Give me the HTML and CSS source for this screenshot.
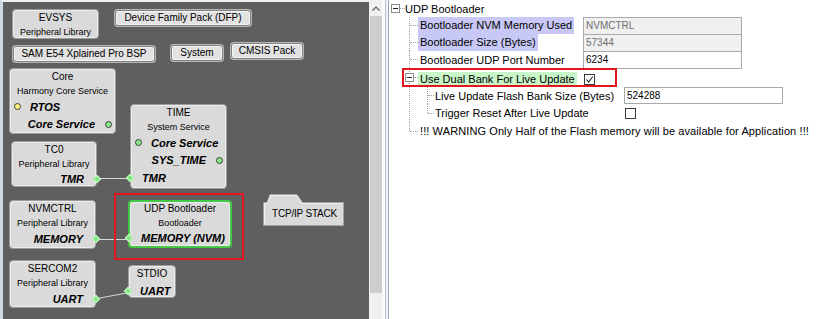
FILE: index.html
```html
<!DOCTYPE html>
<html>
<head>
<meta charset="utf-8">
<link rel="stylesheet" href="styles.css">
</head>
<body>
<div class="app">
  <div class="left">
    <div class="canvas">
      <svg class="wires" width="366" height="317">
        <line x1="94" y1="176.5" x2="127" y2="176.5"/>
        <line x1="93" y1="237.5" x2="125" y2="237.5"/>
        <line x1="93" y1="296.75" x2="125" y2="290.75"/>
      </svg>

      <div class="node evsys">
        <div class="title">EVSYS</div>
        <div class="sub">Peripheral Library</div>
      </div>
      <div class="btn dfp">Device Family Pack (DFP)</div>
      <div class="btn sam">SAM E54 Xplained Pro BSP</div>
      <div class="btn sys">System</div>
      <div class="btn cmsis">CMSIS Pack</div>

      <div class="node core">
        <div class="title">Core</div>
        <div class="sub">Harmony Core Service</div>
        <div class="port in"><i class="dot yellow"></i><span>RTOS</span></div>
        <div class="port out"><span>Core Service</span><i class="dot green"></i></div>
      </div>

      <div class="node time">
        <div class="title">TIME</div>
        <div class="sub">System Service</div>
        <div class="port in"><i class="dot green"></i><span>Core Service</span></div>
        <div class="port out"><span>SYS_TIME</span><i class="dot green"></i></div>
        <div class="port in"><i class="dia"></i><span>TMR</span></div>
      </div>

      <div class="node tc0">
        <div class="title">TC0</div>
        <div class="sub">Peripheral Library</div>
        <div class="port out"><span>TMR</span><i class="dia"></i></div>
      </div>

      <div class="node nvm">
        <div class="title">NVMCTRL</div>
        <div class="sub">Peripheral Library</div>
        <div class="port out"><span>MEMORY</span><i class="dia"></i></div>
      </div>

      <div class="node udp">
        <div class="title">UDP Bootloader</div>
        <div class="sub">Bootloader</div>
        <div class="port in"><i class="dia"></i><span>MEMORY (NVM)</span></div>
      </div>

      <div class="sel"></div>

      <div class="node sercom">
        <div class="title">SERCOM2</div>
        <div class="sub">Peripheral Library</div>
        <div class="port out"><span>UART</span><i class="dia"></i></div>
      </div>

      <div class="node stdio">
        <div class="title">STDIO</div>
        <div class="port in"><i class="dia"></i><span>UART</span></div>
      </div>

      <div class="folder">
        <svg class="folder-shape" width="84" height="34">
          <path d="M1.5 9.5 H5 L8 1.5 H35 L40.5 9.5 H81.5 V32.5 H1.5 Z" fill="#dadada" stroke="#a3a3a3"/>
          <path d="M2.5 31.5 V10.5 H5.5 L8.6 2.5 H34.5 L40 10.5 H80.5" fill="none" stroke="#f2f2f2"/>
        </svg>
        <div class="folder-label">TCP/IP STACK</div>
      </div>
    </div>
  </div>

  <div class="vscroll">
    <div class="arrow">
      <svg width="8" height="5"><polyline points="0.5,4.5 4,1 7.5,4.5" fill="none" stroke="#606060" stroke-width="1.2"/></svg>
    </div>
    <div class="thumb"></div>
  </div>

  <div class="splitter"></div>

  <div class="right">
    <div class="tree">
      <div class="root"><span class="tog"></span><span class="stub"></span><span class="root-label">UDP Bootloader</span></div>
      <div class="kids">
        <div class="item">
          <div class="lc"><span class="hl-blue">Bootloader NVM Memory Used</span></div>
          <div class="field dis">NVMCTRL</div>
        </div>
        <div class="item">
          <div class="lc"><span class="hl-blue">Bootloader Size (Bytes)</span></div>
          <div class="field dis">57344</div>
        </div>
        <div class="item">
          <div class="lc"><span>Bootloader UDP Port Number</span></div>
          <div class="field">6234</div>
        </div>
        <div class="grp">
          <div class="row5">
            <span class="tog"></span><span class="stub short"></span>
            <div class="lc"><span class="hl-green">Use Dual Bank For Live Update</span></div>
            <span class="cb"><svg width="9" height="9"><polyline points="1.5,4.5 3.6,7 7.8,1.5" fill="none" stroke="#2a2a2a" stroke-width="1.1"/></svg></span>
            <div class="hilite"></div>
          </div>
          <div class="kids nested">
            <div class="item">
              <div class="lc"><span>Live Update Flash Bank Size (Bytes)</span></div>
              <div class="field short">524288</div>
            </div>
            <div class="item tall">
              <div class="lc"><span>Trigger Reset After Live Update</span></div>
              <span class="cb"></span>
            </div>
          </div>
        </div>
        <div class="item tall">
          <span class="warn">!!! WARNING Only Half of the Flash memory will be available for Application !!!</span>
        </div>
      </div>
    </div>
  </div>
</div>
</body>
</html>
```

FILE: styles.css
```css
* { box-sizing: border-box; }
html, body { margin: 0; padding: 0; }
body {
  width: 820px;
  height: 319px;
  overflow: hidden;
  background: #ffffff;
  font-family: "Liberation Sans", Arial, sans-serif;
  color: #000;
}
.app { display: flex; height: 319px; }

/* ---------- left diagram ---------- */
.left {
  width: 369px;
  flex: none;
  border-top: 2px solid #eef0f2;
  border-left: 3px solid #d3d9e1;
  background: #5f5f5f;
  overflow: hidden;
}
.canvas { position: relative; width: 100%; height: 100%; }
.wires { position: absolute; left: 0; top: 0; }
.wires line { stroke: #d8d8d8; stroke-width: 1; }

.node {
  position: absolute;
  display: flex;
  flex-direction: column;
  background: #dadada;
  border: 1px solid #9b9b9b;
  border-radius: 4px;
  box-shadow: inset 0 0 0 1px #ececec;
  text-align: center;
}
.title { font-size: 10px; line-height: 15px; white-space: nowrap; }
.sub { font-size: 9px; line-height: 14px; white-space: nowrap; }

.port {
  display: flex;
  align-items: center;
  height: 17.5px;
  font-size: 11px;
  font-weight: bold;
  font-style: italic;
  white-space: nowrap;
}
.port.out { justify-content: flex-end; }
.port.in { justify-content: flex-start; }

.dot {
  flex: none;
  width: 7px;
  height: 7px;
  border-radius: 50%;
  border: 1px solid #3e3e3e;
}
.dot.green { background: #86e886; }
.dot.yellow { background: #fff27a; }
.port.out .dot { margin-left: 9.5px; margin-right: 3.5px; }
.port.in .dot { margin-left: 3.5px; margin-right: 9.5px; }

.dia {
  flex: none;
  width: 6px;
  height: 6px;
  transform: rotate(45deg);
  background: #7fea7f;
  border: 1px solid #c9f6c9;
}
.port.out .dia { margin-left: 10px; margin-right: -4px; }
.port.in .dia { margin-left: -4px; margin-right: 9px; }

.evsys { left: 9px; top: 7px; width: 87px; height: 30px; }
.core { left: 6px; top: 66px; width: 107px; height: 66px; }
.time { left: 127px; top: 102px; width: 97px; height: 85px; }
.tc0 { left: 8px; top: 139px; width: 86px; height: 46px; }
.nvm { left: 6px; top: 198px; width: 87px; height: 49px; }
.udp { left: 125px; top: 198px; width: 104px; height: 48px; border: 2px solid #45c845; }
.udp .title { line-height: 14px; }
.sercom { left: 6px; top: 258px; width: 87px; height: 48px; }
.stdio { left: 125px; top: 263px; width: 48px; height: 33px; }
.stdio .port { margin-top: 3px; }

.btn {
  position: absolute;
  height: 16px;
  background: #e2e2e2;
  border: 1px solid #808080;
  border-radius: 3px;
  box-shadow: 0 0 0 1px #b8b8b8, inset 0 0 0 1px #f6f6f6;
  font-size: 10px;
  line-height: 14px;
  text-align: center;
  white-space: nowrap;
}
.dfp { left: 112px; top: 8px; width: 136px; }
.sam { left: 10px; top: 44px; width: 142px; }
.sys { left: 168px; top: 43px; width: 52px; }
.cmsis { left: 228px; top: 41px; width: 72px; }

.sel {
  position: absolute;
  left: 111px;
  top: 191px;
  width: 130px;
  height: 67px;
  border: 2px solid #e3161d;
}

.folder { position: absolute; left: 259px; top: 191px; width: 84px; height: 34px; }
.folder-shape { position: absolute; left: 0; top: 0; }
.folder-label {
  position: relative;
  padding-top: 15px;
  padding-left: 1px;
  font-size: 10px;
  line-height: 12px;
  letter-spacing: -0.2px;
  text-align: center;
  white-space: nowrap;
}

/* ---------- scrollbar + splitter ---------- */
.vscroll {
  width: 13px;
  flex: none;
  display: flex;
  flex-direction: column;
  background: #f0f0f0;
}
.arrow { height: 16px; display: flex; align-items: center; justify-content: center; padding-left: 1px; }
.thumb { height: 277px; margin-left: 1px; background: #cdcdcd; }
.splitter {
  width: 7px;
  flex: none;
  background: linear-gradient(to right, #fafafa 0 3px, #b8c4d4 3px 4px, #eef1f5 4px 6px, #9eaabb 6px 7px);
}

/* ---------- right tree ---------- */
.right { flex: 1; font-size: 11px; }
.tree { padding-left: 2px; }
.root { display: flex; align-items: center; height: 17px; }
.tog {
  flex: none;
  position: relative;
  width: 9px;
  height: 9px;
  border: 1px solid #8e8e8e;
  background: #fff;
}
.tog::after {
  content: "";
  position: absolute;
  left: 1px;
  right: 1px;
  top: 3px;
  height: 1px;
  background: #222;
}
.stub { flex: none; width: 5px; border-top: 1px dotted #a0a0a0; }
.stub.short { width: 4px; }
.root-label { white-space: nowrap; }

.kids { margin-left: 18px; }
.kids > * { position: relative; }
.kids > *::before {
  content: "";
  position: absolute;
  left: 0;
  top: 0;
  bottom: 0;
  border-left: 1px dotted #a0a0a0;
}
.kids > *:last-child::before { bottom: auto; height: 9px; }

.item { display: flex; align-items: center; height: 17px; padding-left: 9px; }
.item.tall { height: 18px; }
.item::after {
  content: "";
  position: absolute;
  left: 1px;
  top: 8px;
  width: 8px;
  border-top: 1px dotted #a0a0a0;
}
.item.tall::after { top: 9px; }

.lc { flex: none; width: 165px; align-self: stretch; display: flex; align-items: center; white-space: nowrap; }
.lc span { padding: 0 2px; }
.hl-blue { background: #c8c8f6; line-height: 17px; }
.hl-green { background: #c8f6c8; line-height: 14px; margin-top: 2px; }

.field {
  flex: none;
  align-self: flex-start;
  width: 159px;
  height: 18px;
  border: 1px solid #a9a9a9;
  background: #fff;
  padding-left: 2px;
  font-size: 10px;
  line-height: 16px;
}
.field.dis { background: #f0f0f0; color: #6f6f6f; }
.field.short { height: 17px; line-height: 15px; }

.row5 { position: relative; display: flex; align-items: center; height: 19px; }
.row5 .tog { margin-left: -4px; }
.cb {
  flex: none;
  display: flex;
  align-items: center;
  justify-content: center;
  width: 11px;
  height: 11px;
  margin-left: 1px;
  border: 1px solid #3a3a3a;
  background: #fff;
}
.row5 .cb { margin-top: 3px; }
.hilite {
  position: absolute;
  left: -7px;
  top: 0;
  width: 215px;
  height: 19px;
  border: 2px solid #e3161d;
}

.nested { margin-left: 18px; }
.nested .item { padding-left: 6px; }
.nested .item::after { width: 6px; }
.nested .lc { width: 191px; }

.warn { padding-left: 2px; white-space: nowrap; letter-spacing: 0.1px; }
```
